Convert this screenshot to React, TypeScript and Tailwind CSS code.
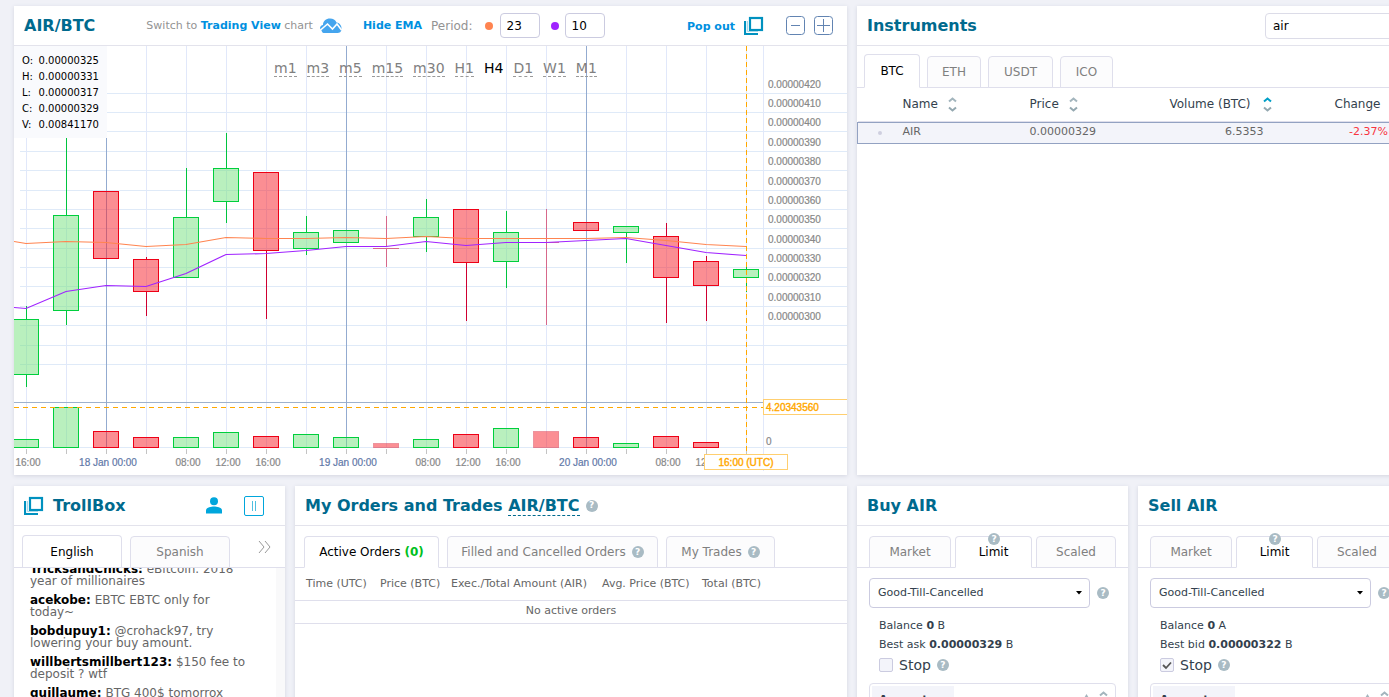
import { useState } from 'react';
import type { ReactNode } from 'react';
import clsx from 'clsx';

type Candle = {
  x: number;
  high: number;
  top: number;
  bottom: number;
  low: number;
  vol: number;
  up: boolean;
  faded?: boolean;
};

const CANDLES: Candle[] = [
  { x: 26, high: 306, top: 319, bottom: 374, low: 387, vol: 439, up: true },
  { x: 66, high: 138, top: 215, bottom: 310, low: 325, vol: 407, up: true },
  { x: 106, high: 191, top: 191, bottom: 258, low: 258, vol: 431, up: false },
  { x: 146, high: 257, top: 259, bottom: 291, low: 316, vol: 437, up: false },
  { x: 186, high: 168, top: 217, bottom: 277, low: 277, vol: 437, up: true },
  { x: 226, high: 133, top: 168, bottom: 201, low: 223, vol: 432, up: true },
  { x: 266, high: 172, top: 172, bottom: 250, low: 319, vol: 436, up: false },
  { x: 306, high: 216, top: 232, bottom: 248, low: 255, vol: 434, up: true },
  { x: 346, high: 230, top: 230, bottom: 242, low: 242, vol: 437, up: true },
  { x: 386, high: 216, top: 247, bottom: 248, low: 267, vol: 443, up: false, faded: true },
  { x: 426, high: 199, top: 217, bottom: 236, low: 252, vol: 439, up: true },
  { x: 466, high: 209, top: 209, bottom: 262, low: 321, vol: 434, up: false },
  { x: 506, high: 211, top: 232, bottom: 261, low: 288, vol: 428, up: true },
  { x: 546, high: 209, top: 242, bottom: 242, low: 325, vol: 431, up: false, faded: true },
  { x: 586, high: 222, top: 222, bottom: 230, low: 230, vol: 437, up: false },
  { x: 626, high: 226, top: 226, bottom: 232, low: 263, vol: 443, up: true },
  { x: 666, high: 223, top: 236, bottom: 277, low: 323, vol: 436, up: false },
  { x: 706, high: 256, top: 261, bottom: 285, low: 321, vol: 442, up: false },
  { x: 746, high: 267, top: 269, bottom: 277, low: 292, vol: 447, up: true },
];

const PRICE_ROWS = [93, 112, 131, 151, 170, 190, 209, 228, 248, 267, 286, 306, 325, 345, 364];
const PRICES = ['420', '410', '400', '390', '380', '370', '360', '350', '340', '330', '320', '310', '300'];

const TIMES = [
  { x: 28, label: '16:00' },
  { x: 108, label: '18 Jan 00:00', day: true },
  { x: 188, label: '08:00' },
  { x: 228, label: '12:00' },
  { x: 268, label: '16:00' },
  { x: 348, label: '19 Jan 00:00', day: true },
  { x: 428, label: '08:00' },
  { x: 468, label: '12:00' },
  { x: 508, label: '16:00' },
  { x: 588, label: '20 Jan 00:00', day: true },
  { x: 668, label: '08:00' },
  { x: 708, label: '12:00' },
];

const EMA_SLOW =
  '14,241.5 26,243.5 66,241.5 106,242.5 146,246.5 186,244.5 226,237.5 266,238.5 306,238.5 346,237.5 386,238.5 426,236.5 466,238.5 586,238.5 626,237.5 666,240.5 706,244.5 746,246.5';
const EMA_FAST =
  '14,307.5 26,308.5 66,291.5 106,285.5 146,286.5 186,273.5 226,254.5 266,253.5 306,250.5 346,246.5 386,246.5 426,241.5 466,245.5 506,242.5 546,242.5 586,240.5 626,238.5 666,245.5 706,252.5 746,255.5';

const OHLC = [
  ['O:', '0.00000325'],
  ['H:', '0.00000331'],
  ['L:', '0.00000317'],
  ['C:', '0.00000329'],
  ['V:', '0.00841170'],
];

const FRAMES = ['m1', 'm3', 'm5', 'm15', 'm30', 'H1', 'H4', 'D1', 'W1', 'M1'];

const MESSAGES = [
  { user: 'TricksandChicks', text: 'eBitcoin. 2018 year of millionaires' },
  { user: 'acekobe', text: 'EBTC EBTC only for today~' },
  { user: 'bobdupuy1', text: '@crohack97, try lowering your buy amount.' },
  { user: 'willbertsmillbert123', text: '$150 fee to deposit ? wtf' },
  { user: 'guillaume', text: 'BTG 400$ tomorrox' },
];

function Panel({ className, children }: { className?: string; children: ReactNode }) {
  return <section className={clsx('bg-white shadow-[0_1px_4px_#d3d6e0]', className)}>{children}</section>;
}

function PanelHeader({ className, children }: { className?: string; children: ReactNode }) {
  return (
    <header className={clsx('flex h-10 shrink-0 items-center border-b border-[#e3e3ec] px-[10px]', className)}>
      {children}
    </header>
  );
}

function Title({ children }: { children: ReactNode }) {
  return <h2 className="text-[16px] font-bold whitespace-nowrap text-[#006a8e]">{children}</h2>;
}

function Help({ className }: { className?: string }) {
  return (
    <span
      className={clsx(
        'inline-flex size-3 shrink-0 items-center justify-center rounded-full bg-[#a9bbc4] text-[9px] leading-none font-bold text-white',
        className,
      )}
    >
      ?
    </span>
  );
}

function Tab({ active, className, children }: { active?: boolean; className?: string; children: ReactNode }) {
  return (
    <button
      type="button"
      className={clsx(
        'relative -mb-px flex h-8 items-center justify-center rounded-t border border-[#dfdfec] text-[12px] whitespace-nowrap',
        active ? 'border-b-white bg-white text-black' : 'bg-[#fcfcfd] text-[#808080]',
        className,
      )}
    >
      {children}
    </button>
  );
}

function PopOutIcon() {
  return (
    <svg width="20" height="20" viewBox="0 0 20 20" fill="none">
      <rect x="6" y="2" width="12" height="12" stroke="#0091bf" strokeWidth="2.200" />
      <path d="M1 5V18H14" stroke="#0091bf" strokeWidth="2.200" />
      <path d="M3.500 5V15.500H14" stroke="#a5d8e8" />
    </svg>
  );
}

function SortArrows({ up }: { up?: boolean }) {
  return (
    <svg className="shrink-0" width="9" height="15" viewBox="0 0 9 15" fill="none" strokeWidth="2">
      <path d="M1 4.500L4.500 1.500L8 4.500" stroke={up ? '#009fc7' : '#a3b5bd'} />
      <path d="M1 10.500L4.500 13.500L8 10.500" stroke="#94a8b0" />
    </svg>
  );
}

function Chart() {
  return (
    <svg className="block h-[429px] w-full" viewBox="14 46 833 429" preserveAspectRatio="xMaxYMin slice">
      <g shapeRendering="crispEdges">
        {PRICE_ROWS.map((y) => (
          <path key={y} d={`M20 ${y}.5H847`} stroke="#dfeaf8" />
        ))}
        <path d="M14 447.5H847" stroke="#dfeaf8" />
        {CANDLES.map((c) => (
          <path key={c.x} d={`M${c.x}.5 46V447`} stroke="#e1e8fa" />
        ))}
        <path d="M763.5 46V471" stroke="#e1e8fa" />
        <path d="M14 402.5H847" stroke="#9db1cd" />
        {[106, 346, 586].map((x) => (
          <path key={x} d={`M${x}.5 46V447`} stroke="#93abd0" />
        ))}
        {CANDLES.map((c) => (
          <path key={c.x} d={`M${c.x}.5 449V454`} stroke="#c4c4c4" />
        ))}

        {CANDLES.map((c) => {
          const stroke = c.up ? '#00cf3d' : '#ee0016';
          const wick = c.up ? '#00c43f' : '#cf0031';
          const fill = c.up ? 'rgba(115,225,125,0.5)' : 'rgba(248,30,40,0.5)';
          return (
            <g key={c.x} opacity={c.faded ? 0.55 : 1}>
              {c.high < c.top && <path d={`M${c.x}.5 ${c.high}V${c.top}`} stroke={wick} />}
              {c.low > c.bottom && <path d={`M${c.x}.5 ${c.bottom}V${c.low}`} stroke={wick} />}
              {c.bottom - c.top > 1 ? (
                <rect x={c.x - 12.5} y={c.top + 0.5} width="25" height={c.bottom - c.top} fill={fill} stroke={stroke} />
              ) : (
                <path d={`M${c.x - 13} ${c.bottom}.5H${c.x + 13}`} stroke={wick} />
              )}
              <rect
                x={c.x - 12.5}
                y={c.vol + 0.5}
                width="25"
                height={447 - c.vol}
                fill={c.faded ? 'rgba(248,30,40,0.9)' : fill}
                stroke={c.faded ? 'rgba(220,40,60,0.9)' : stroke}
              />
            </g>
          );
        })}
        <path d="M14 407.5H763" stroke="#ffa800" strokeDasharray="5 4" />
        <path d="M746.5 46V454" stroke="#ffa800" strokeDasharray="5 3" />
      </g>
      <polyline points={EMA_SLOW} fill="none" stroke="#ff8450" strokeWidth="1.200" />
      <polyline points={EMA_FAST} fill="none" stroke="#a023ff" strokeWidth="1.200" />

      <g className="font-['Liberation_Sans',Arial,sans-serif] text-[10px]" fill="#888" stroke="#888" strokeWidth="0.2">
        {PRICES.map((p, i) => (
          <text key={p} x="768" y={PRICE_ROWS[i] - 5}>
            0.00000{p}
          </text>
        ))}
        <text x="766" y="445">0</text>
        {TIMES.map((t) => (
          <text key={t.x} x={t.x} y="466" textAnchor="middle" fill={t.day ? '#5f78a8' : '#888'} stroke={t.day ? '#5f78a8' : '#888'}>
            {t.label}
          </text>
        ))}
        <rect x="763.5" y="399.5" width="90" height="15" fill="#fff" stroke="#ffcf70" strokeWidth="1" />
        <rect x="704.5" y="454.5" width="83" height="15" fill="#fff" stroke="#ffcf70" strokeWidth="1" />
        <g fill="#ffa800" stroke="#ffa800" strokeWidth="0.4">
          <text x="766" y="411">4.20343560</text>
          <text x="746" y="466" textAnchor="middle">16:00 (UTC)</text>
        </g>
      </g>
    </svg>
  );
}

function ChartPanel() {
  const [frame, setFrame] = useState('H4');
  return (
    <Panel>
      <PanelHeader>
        <Title>AIR/BTC</Title>
        <p className="ml-[51px] flex items-center pt-px text-[11px] whitespace-pre text-[#939393]">
          Switch to <a href="#tv" className="font-bold text-[#0090e0]">Trading View</a> chart
          <svg className="ml-[6px]" width="23" height="16" viewBox="0 0 23 16">
            <path
              d="M2.500 12.500C0 10.500 1 7.500 4 7C4 3 7 .5 11 .5C14 .5 16.500 2 17.500 4.500C21 5 23 8 22.500 11.500C22.300 14 20.500 15 18.500 15H4.500C3.600 15 3 14 2.500 12.500Z"
              fill="#45a5ee"
            />
            <path d="M1 12.500L8.500 6L13.500 11L18 6L22.500 12" fill="none" stroke="#fff" strokeWidth="1.600" />
          </svg>
        </p>
        <button type="button" className="ml-[21px] pt-px text-[11px] font-bold whitespace-nowrap text-[#0090e0]">Hide EMA</button>
        <span className="ml-[9px] text-[12px] text-[#939393]">Period:</span>
        <span className="ml-3 size-2 rounded-full bg-[#ff8450]" />
        <input aria-label="Slow EMA period" defaultValue="23" className="ml-[7px] h-[25px] w-10 rounded border border-[#cbcbe0] px-[6px] text-[12px] text-black" />
        <span className="ml-[11px] size-2 rounded-full bg-[#a023ff]" />
        <input aria-label="Fast EMA period" defaultValue="10" className="ml-[6px] h-[25px] w-10 rounded border border-[#cbcbe0] px-[6px] text-[12px] text-black" />
        <button type="button" className="ml-auto flex items-center gap-[9px] text-[11px] font-bold whitespace-nowrap text-[#0090e0]">
          <span className="pt-1">Pop out</span>
          <PopOutIcon />
        </button>
        <div className="mr-1 ml-[22px] flex gap-[9px]">
          <button type="button" aria-label="Zoom out">
            <svg width="19" height="19" viewBox="0 0 19 19" fill="none" stroke="#6284b2">
              <rect x=".5" y=".5" width="18" height="18" rx="3" />
              <path d="M5 9.500H14" />
            </svg>
          </button>
          <button type="button" aria-label="Zoom in">
            <svg width="19" height="19" viewBox="0 0 19 19" fill="none" stroke="#6284b2">
              <rect x=".5" y=".5" width="18" height="18" rx="3" />
              <path d="M3 9.500H16M9.500 3V16" />
            </svg>
          </button>
        </div>
      </PanelHeader>
      <div className="relative">
        <Chart />
        <dl className="absolute top-0 left-0 w-[93px] bg-[#f9fafd] px-2 pt-[7px] pb-[5px] text-[10px] leading-4 text-black">
          {OHLC.map(([k, v]) => (
            <div key={k} className="flex">
              <dt className="w-[17px]">{k}</dt>
              <dd>{v}</dd>
            </div>
          ))}
        </dl>
        <div className="absolute top-[14px] left-[260px] flex gap-[10px] text-[14px] leading-4">
          {FRAMES.map((f) => (
            <button
              key={f}
              type="button"
              onClick={() => setFrame(f)}
              className={clsx('border-b border-dashed', f === frame ? 'border-transparent text-black' : 'border-[#999] text-[#808080]')}
            >
              {f}
            </button>
          ))}
        </div>
      </div>
    </Panel>
  );
}

function Instruments() {
  return (
    <Panel>
      <PanelHeader className="justify-between">
        <Title>Instruments</Title>
        <input aria-label="Search instruments" defaultValue="air" className="h-[26px] w-[134px] rounded border border-[#dcdce8] px-[7px] text-[12px] text-black" />
      </PanelHeader>
      <div className="flex h-[42px] items-end gap-[7px] border-b border-[#dfdfec] px-[7px] text-[12px]">
        <Tab active className="h-[34px] w-14">BTC</Tab>
        <Tab className="w-[54px]">ETH</Tab>
        <Tab className="w-[65px]">USDT</Tab>
        <Tab className="w-[53px]">ICO</Tab>
      </div>
      <table className="w-full table-fixed border-collapse text-left text-[12px] text-[#333f4d]">
        <colgroup>
          <col className="w-[45px]" />
          <col className="w-[127px]" />
          <col className="w-[140px]" />
          <col className="w-[106px]" />
          <col />
        </colgroup>
        <thead>
          <tr className="h-[33px] border-b border-[#dfdfec]">
            <th />
            <th className="font-normal"><span className="flex items-center gap-[10px]">Name <SortArrows /></span></th>
            <th className="font-normal"><span className="flex items-center gap-[10px]">Price <SortArrows /></span></th>
            <th className="font-normal"><span className="flex items-center gap-[12px] whitespace-nowrap">Volume (BTC) <SortArrows up /></span></th>
            <th className="pl-[59px] font-normal">Change</th>
          </tr>
          <tr className="h-px" />
        </thead>
        <tbody>
          <tr className="h-[21px] border border-[#93a2c2] bg-[#f3f4fa] text-[11px] text-[#666]">
            <td><span className="mx-auto block size-1 rounded-full bg-[#cfcfdf]" /></td>
            <td>AIR</td>
            <td>0.00000329</td>
            <td className="pr-3 text-right">6.5353</td>
            <td className="pr-5 text-right text-[#f83440]">-2.37%</td>
          </tr>
        </tbody>
      </table>
    </Panel>
  );
}

function TrollBox() {
  return (
    <Panel className="flex h-[260px] w-[271px] shrink-0 flex-col">
      <PanelHeader>
        <button type="button" aria-label="Pop out TrollBox" className="mr-[9px]"><PopOutIcon /></button>
        <Title>TrollBox</Title>
        <button type="button" aria-label="Profile" className="ml-auto">
          <svg width="16" height="17" viewBox="0 0 16 17" fill="#00a6dc">
            <circle cx="8" cy="4.200" r="4" />
            <path d="M0 16.500V13.500C0 10.500 5 9.500 8 9.500S16 10.500 16 13.500V16.500Z" />
          </svg>
        </button>
        <button type="button" aria-label="Pause" className="mr-[11px] ml-[22px] flex size-5 items-center justify-center gap-[2px] rounded-[2px] border border-[#00a6dc]">
          <span className="h-[10px] w-px bg-[#4fbfe0]" />
          <span className="h-[10px] w-px bg-[#4fbfe0]" />
        </button>
      </PanelHeader>
      <div className="flex h-[42px] shrink-0 items-end gap-2 border-b border-[#dfdfec] px-2">
        <button type="button" className="flex h-8 w-[100px] shrink-0 items-center justify-center rounded-t border border-b-0 border-[#dfdfec] text-[12px] text-black">
          English
        </button>
        <Tab className="w-[100px] shrink-0">Spanish</Tab>
        <button type="button" aria-label="More rooms" className="ml-5 self-center">
          <svg width="13" height="14" viewBox="0 0 13 14" fill="none" stroke="#999">
            <path d="M1 1L6 7L1 13M7 1L12 7L7 13" />
          </svg>
        </button>
      </div>
      <div className="flex-1 overflow-hidden border-r-[9px] border-[#f9f9fa]">
        <ul className="-mt-[5px] flex w-[240px] flex-col gap-[7px] pl-4 text-[12px] leading-3 text-[#666]">
          {MESSAGES.map((m) => (
            <li key={m.user}>
              <b className="text-black">{m.user}:</b> {m.text}
            </li>
          ))}
        </ul>
      </div>
    </Panel>
  );
}

function Orders() {
  return (
    <Panel className="h-[260px] min-w-0 flex-1">
      <PanelHeader>
        <Title>
          My Orders and Trades <a href="#pair" className="border-b border-dashed border-[#006a8e]">AIR/BTC</a>
        </Title>
        <Help className="ml-[6px]" />
      </PanelHeader>
      <div className="flex h-[42px] items-end gap-2 border-b border-[#dfdfec] pl-[9px]">
        <Tab active className="w-[135px] gap-1">
          Active Orders <b className="text-[#00c020]">(0)</b>
        </Tab>
        <Tab className="w-[211px] gap-[6px]">Filled and Cancelled Orders <Help /></Tab>
        <Tab className="w-[109px] gap-[6px]">My Trades <Help /></Tab>
      </div>
      <table className="w-full table-fixed text-left text-[11px] whitespace-nowrap text-[#666]">
        <colgroup>
          <col className="w-[85px]" />
          <col className="w-[71px]" />
          <col className="w-[151px]" />
          <col className="w-[100px]" />
          <col />
        </colgroup>
        <thead>
          <tr className="h-8 border-b border-[#dfdfec]">
            <th className="pl-[11px] font-normal">Time (UTC)</th>
            <th className="font-normal">Price (BTC)</th>
            <th className="font-normal">Exec./Total Amount (AIR)</th>
            <th className="font-normal">Avg. Price (BTC)</th>
            <th className="font-normal">Total (BTC)</th>
          </tr>
        </thead>
        <tbody>
          <tr className="h-[23px] border-b border-[#dfdfec]">
            <td colSpan={5} className="text-center">No active orders</td>
          </tr>
        </tbody>
      </table>
    </Panel>
  );
}

type TradeFormProps = { side: string; unit: string; best: string; price: string; stop?: boolean };

function TradeForm({ side, unit, best, price, stop }: TradeFormProps) {
  const [checked, setChecked] = useState(!!stop);
  return (
    <Panel className="h-[260px] w-[271px] shrink-0">
      <PanelHeader>
        <Title>{side} AIR</Title>
      </PanelHeader>
      <div className="flex h-[42px] items-end gap-1 border-b border-[#dfdfec] pl-3">
        <Tab className="w-[82px]">Market</Tab>
        <Tab active className="w-[77px]">
          Limit
          <Help className="absolute -top-1 left-8" />
        </Tab>
        <Tab className="w-20">Scaled</Tab>
      </div>
      <div className="px-3 pt-[10px] text-[11px] text-[#333f4d]">
        <div className="flex items-center gap-[7px]">
          <div className="relative w-[221px]">
            <select aria-label="Time in force" className="h-[30px] w-full appearance-none rounded border border-[#cbcbe0] px-2 pt-px text-[11px]">
              <option>Good-Till-Cancelled</option>
              <option>Immediate-Or-Cancel</option>
            </select>
            <svg className="pointer-events-none absolute top-[13px] right-2" width="6" height="4" viewBox="0 0 6 4">
              <path d="M0 0H6L3 3.500Z" fill="#000" />
            </svg>
          </div>
          <Help />
        </div>
        <div className="px-[10px] pt-2 leading-[19px]">
          <p>Balance <b>0</b> {unit}</p>
          <p>{best} <b>{price}</b> B</p>
        </div>
        <label className="flex h-[22px] items-center gap-[6px] pl-[10px] text-[14px]">
          <span className="relative flex size-[14px]">
            <input
              type="checkbox"
              checked={checked}
              onChange={(e) => setChecked(e.target.checked)}
              className="size-[14px] appearance-none rounded-[2px] border border-[#cbcbe0] bg-[#f3f4fa]"
            />
            {checked && (
              <svg className="pointer-events-none absolute inset-0" width="14" height="14" viewBox="0 0 14 14" fill="none">
                <path d="M3 7L6 10L11 4.500" stroke="#555" strokeWidth="1.800" />
              </svg>
            )}
          </span>
          Stop
          <Help />
        </label>
        <div className="mt-[7px] flex h-9 w-[247px] rounded border border-[#dfdfec] p-[2px]">
          <label htmlFor={`${side}-amount`} className="w-[82px] bg-[#f3f4fa] pt-[6px] pl-[7px] text-[11px] font-bold">
            Amount
          </label>
          <input id={`${side}-amount`} className="w-full min-w-0 flex-1" />
          <div className="flex gap-2 pt-[5px] pr-[5px]">
            <svg width="9" height="10" viewBox="0 0 9 10"><path d="M1.500 8L4.500 3L7.500 8Z" fill="#a3b5bd" /></svg>
            <SortArrows />
          </div>
        </div>
      </div>
    </Panel>
  );
}

export default function App() {
  return (
    <div className="h-screen overflow-hidden bg-[#f0f1f7] pt-[6px] pl-[14px] font-['DejaVu_Sans',Verdana,sans-serif]">
      <div className="grid grid-cols-[minmax(0,1fr)_532px] gap-x-[10px] gap-y-[11px]">
        <ChartPanel />
        <div className="grid w-[552px]">
          <Instruments />
        </div>
        <div className="flex gap-[10px]">
          <TrollBox />
          <Orders />
        </div>
        <div className="flex w-[552px] gap-[10px]">
          <TradeForm side="Buy" unit="B" best="Best ask" price="0.00000329" />
          <TradeForm side="Sell" unit="A" best="Best bid" price="0.00000322" stop />
        </div>
      </div>
    </div>
  );
}
